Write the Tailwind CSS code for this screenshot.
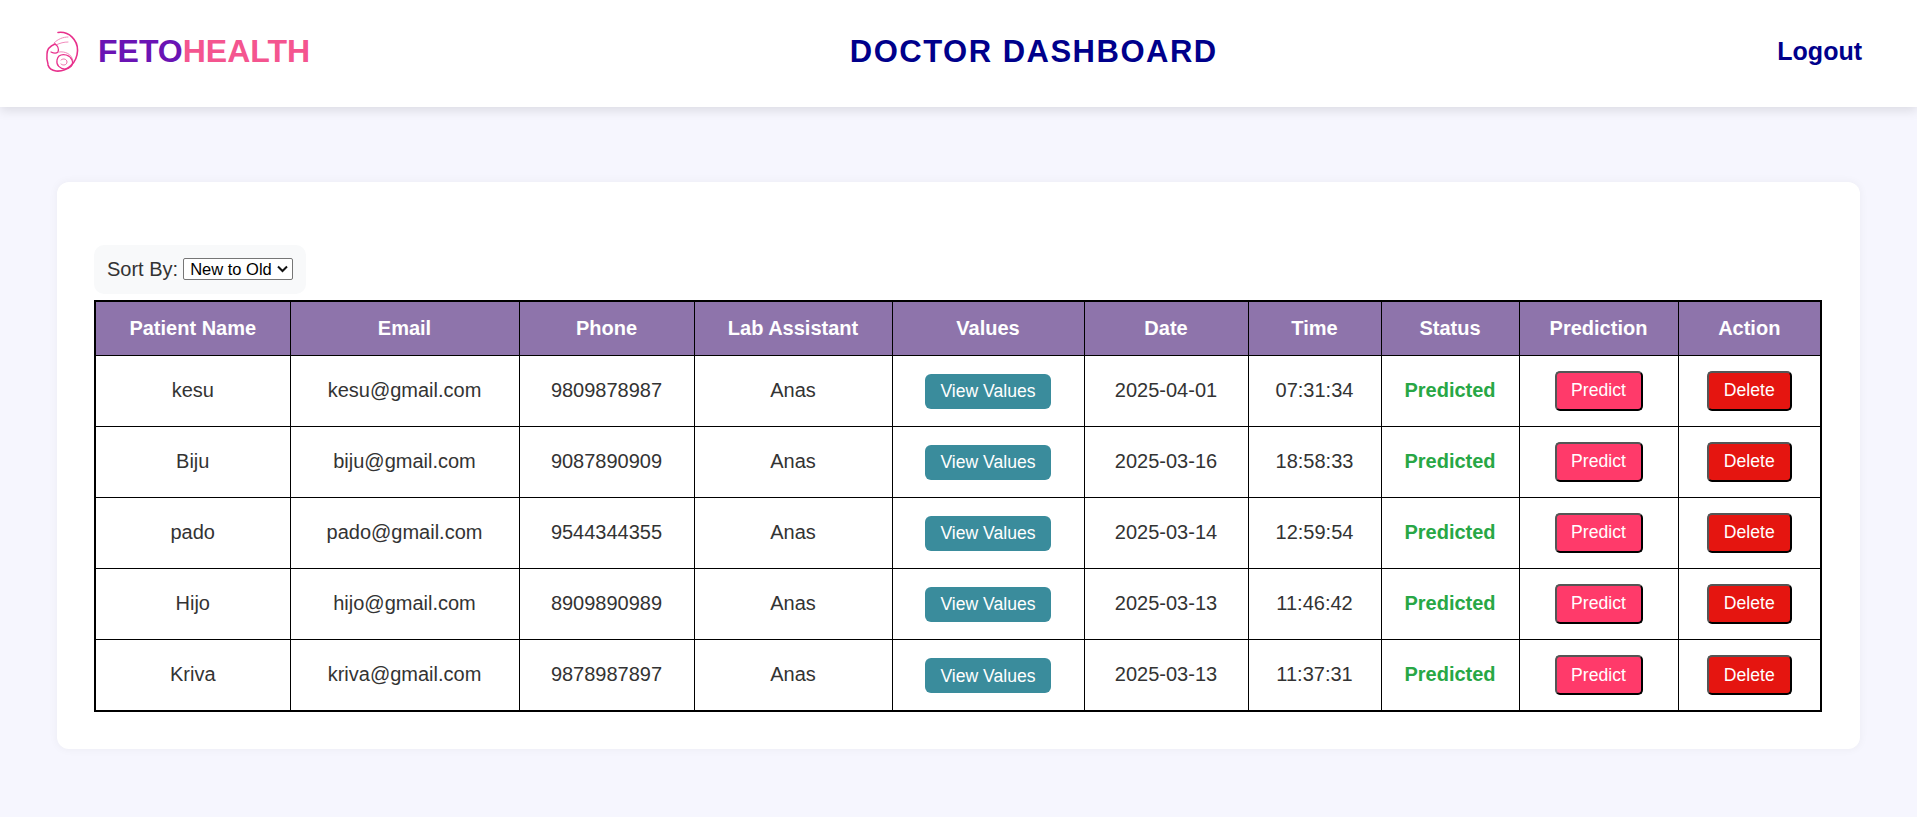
<!DOCTYPE html>
<html lang="en">
<head>
  <meta charset="UTF-8" />
  <meta name="viewport" content="width=device-width, initial-scale=1" />
  <title>FetoHealth – Doctor Dashboard</title>
  <script src="https://cdn.jsdelivr.net/npm/@tailwindcss/browser@4"></script>
</head>
<body class="bg-[#f6f6fe] min-h-screen font-['Liberation_Sans',Arial,sans-serif] text-[#333]">

  <!-- Top Navigation -->
  <nav class="h-[107px] bg-white shadow-[0_4px_10px_rgba(0,0,0,0.1)] pl-[45px] pr-[35px] pb-[5px] flex justify-between items-center">
    <div class="flex items-center">
      <svg class="w-[36px] h-[42px] mt-[1px]" viewBox="0 0 36 42" fill="none" stroke="#e8308c" stroke-linecap="round">
        <path d="M13 1.5C24 0 33 9 32.5 20C32 32 22 41 11 40C7 39.5 4 37 3 34" stroke-width="1.6" />
        <path d="M10 13C5 15 2 19 2 23C1.5 27 2 30 3 33" stroke-width="1.5" />
        <path d="M9 12C13 8 18 6 23 6M11 14C15 12 19 11 23 11" stroke-width="1" stroke="#f28bbd" />
        <path d="M10 13C13 15 14 18 13 21C11 23 8 22 6 21" stroke-width="1.2" />
        <path d="M14 21C20 20 27 23 28 30" stroke-width="1" stroke="#f28bbd" />
        <path d="M14 25C18 22 25 24 27 29C29 34 25 38 20 38C15 38 11 34 12 29C12.5 27 13 26 14 25Z" stroke-width="1.2" />
        <path d="M16 29C18 27 22 28 22 31C22 34 18 35 16 33" stroke-width="1" stroke="#ee6aa9" />
      </svg>
      <h1 class="ml-[17px] text-[32px] font-bold leading-none text-[#6a14b4]">FETO<span class="text-[#f4558f]">HEALTH</span></h1>
    </div>
    <h2 class="text-[31px] font-bold tracking-[1.5px] leading-none text-[#00008b]">DOCTOR DASHBOARD</h2>
    <a href="#" class="px-5 pt-[2px] text-[25px] font-bold text-[#00008b]">Logout</a>
  </nav>

  <!-- Patient Table -->
  <main class="mt-[75px] mx-[57px] h-[567px] bg-white rounded-[12px] shadow-[0_0_10px_rgba(0,0,0,0.05)] pt-[63px] px-[37px]">
    <div class="w-[212px] h-[49px] mb-[6px] pl-[13px] pb-[2px] flex items-center bg-[#f8f9fa] rounded-[10px] text-[20px]">
      <label for="sort" class="whitespace-nowrap">Sort By:</label>
      <div class="relative shrink-0 ml-[5px] mt-[1px] w-[110px] h-[22px]">
        <select id="sort" class="appearance-none block w-full h-full pl-[6px] border border-[#767676] rounded-[2px] bg-white text-[16.5px] leading-[20px] text-black">
          <option>New to Old</option>
          <option>Old to New</option>
        </select>
        <svg class="absolute right-[5px] top-[7px] w-[11px] h-[8px] pointer-events-none" viewBox="0 0 11 8" fill="none" stroke="#111" stroke-width="2"><path d="M1 1.5L5.5 6L10 1.5" /></svg>
      </div>
    </div>

    <table class="w-[1726px] table-fixed border-collapse border-2 border-black text-[20px] text-center">
      <colgroup>
        <col class="w-[195px]" />
        <col class="w-[229px]" />
        <col class="w-[175px]" />
        <col class="w-[198px]" />
        <col class="w-[192px]" />
        <col class="w-[164px]" />
        <col class="w-[133px]" />
        <col class="w-[138px]" />
        <col class="w-[159px]" />
        <col class="w-[143px]" />
      </colgroup>
      <thead class="bg-[#8e74ab] text-white">
        <tr class="h-[54px]">
          <th class="border border-black">Patient Name</th>
          <th class="border border-black">Email</th>
          <th class="border border-black">Phone</th>
          <th class="border border-black">Lab Assistant</th>
          <th class="border border-black">Values</th>
          <th class="border border-black">Date</th>
          <th class="border border-black">Time</th>
          <th class="border border-black">Status</th>
          <th class="border border-black">Prediction</th>
          <th class="border border-black">Action</th>
        </tr>
      </thead>
      <tbody>
        <tr class="h-[71px] [&>td]:pb-[2px]">
          <td class="border border-black">kesu</td>
          <td class="border border-black">kesu@gmail.com</td>
          <td class="border border-black">9809878987</td>
          <td class="border border-black">Anas</td>
          <td class="border border-black"><button class="w-[126px] h-[35px] mt-[4px] rounded-[6px] bg-[#3a8c9c] text-white text-[17.6px]">View Values</button></td>
          <td class="border border-black">2025-04-01</td>
          <td class="border border-black">07:31:34</td>
          <td class="border border-black font-bold text-[#28a745]">Predicted</td>
          <td class="border border-black"><button class="w-[88px] h-[40px] mt-[2px] rounded-[5px] border-2 border-[#555] border-r-black border-b-black bg-[#ff3a6a] text-white text-[17.6px]">Predict</button></td>
          <td class="border border-black"><button class="w-[85px] h-[40px] mt-[2px] rounded-[5px] border-2 border-[#555] border-r-black border-b-black bg-[#e51510] text-white text-[17.6px]">Delete</button></td>
        </tr>
        <tr class="h-[71px] [&>td]:pb-[2px]">
          <td class="border border-black">Biju</td>
          <td class="border border-black">biju@gmail.com</td>
          <td class="border border-black">9087890909</td>
          <td class="border border-black">Anas</td>
          <td class="border border-black"><button class="w-[126px] h-[35px] mt-[4px] rounded-[6px] bg-[#3a8c9c] text-white text-[17.6px]">View Values</button></td>
          <td class="border border-black">2025-03-16</td>
          <td class="border border-black">18:58:33</td>
          <td class="border border-black font-bold text-[#28a745]">Predicted</td>
          <td class="border border-black"><button class="w-[88px] h-[40px] mt-[2px] rounded-[5px] border-2 border-[#555] border-r-black border-b-black bg-[#ff3a6a] text-white text-[17.6px]">Predict</button></td>
          <td class="border border-black"><button class="w-[85px] h-[40px] mt-[2px] rounded-[5px] border-2 border-[#555] border-r-black border-b-black bg-[#e51510] text-white text-[17.6px]">Delete</button></td>
        </tr>
        <tr class="h-[71px] [&>td]:pb-[2px]">
          <td class="border border-black">pado</td>
          <td class="border border-black">pado@gmail.com</td>
          <td class="border border-black">9544344355</td>
          <td class="border border-black">Anas</td>
          <td class="border border-black"><button class="w-[126px] h-[35px] mt-[4px] rounded-[6px] bg-[#3a8c9c] text-white text-[17.6px]">View Values</button></td>
          <td class="border border-black">2025-03-14</td>
          <td class="border border-black">12:59:54</td>
          <td class="border border-black font-bold text-[#28a745]">Predicted</td>
          <td class="border border-black"><button class="w-[88px] h-[40px] mt-[2px] rounded-[5px] border-2 border-[#555] border-r-black border-b-black bg-[#ff3a6a] text-white text-[17.6px]">Predict</button></td>
          <td class="border border-black"><button class="w-[85px] h-[40px] mt-[2px] rounded-[5px] border-2 border-[#555] border-r-black border-b-black bg-[#e51510] text-white text-[17.6px]">Delete</button></td>
        </tr>
        <tr class="h-[71px] [&>td]:pb-[2px]">
          <td class="border border-black">Hijo</td>
          <td class="border border-black">hijo@gmail.com</td>
          <td class="border border-black">8909890989</td>
          <td class="border border-black">Anas</td>
          <td class="border border-black"><button class="w-[126px] h-[35px] mt-[4px] rounded-[6px] bg-[#3a8c9c] text-white text-[17.6px]">View Values</button></td>
          <td class="border border-black">2025-03-13</td>
          <td class="border border-black">11:46:42</td>
          <td class="border border-black font-bold text-[#28a745]">Predicted</td>
          <td class="border border-black"><button class="w-[88px] h-[40px] mt-[2px] rounded-[5px] border-2 border-[#555] border-r-black border-b-black bg-[#ff3a6a] text-white text-[17.6px]">Predict</button></td>
          <td class="border border-black"><button class="w-[85px] h-[40px] mt-[2px] rounded-[5px] border-2 border-[#555] border-r-black border-b-black bg-[#e51510] text-white text-[17.6px]">Delete</button></td>
        </tr>
        <tr class="h-[72px] [&>td]:pb-[2px]">
          <td class="border border-black">Kriva</td>
          <td class="border border-black">kriva@gmail.com</td>
          <td class="border border-black">9878987897</td>
          <td class="border border-black">Anas</td>
          <td class="border border-black"><button class="w-[126px] h-[35px] mt-[4px] rounded-[6px] bg-[#3a8c9c] text-white text-[17.6px]">View Values</button></td>
          <td class="border border-black">2025-03-13</td>
          <td class="border border-black">11:37:31</td>
          <td class="border border-black font-bold text-[#28a745]">Predicted</td>
          <td class="border border-black"><button class="w-[88px] h-[40px] mt-[2px] rounded-[5px] border-2 border-[#555] border-r-black border-b-black bg-[#ff3a6a] text-white text-[17.6px]">Predict</button></td>
          <td class="border border-black"><button class="w-[85px] h-[40px] mt-[2px] rounded-[5px] border-2 border-[#555] border-r-black border-b-black bg-[#e51510] text-white text-[17.6px]">Delete</button></td>
        </tr>
      </tbody>
    </table>
  </main>
</body>
</html>
